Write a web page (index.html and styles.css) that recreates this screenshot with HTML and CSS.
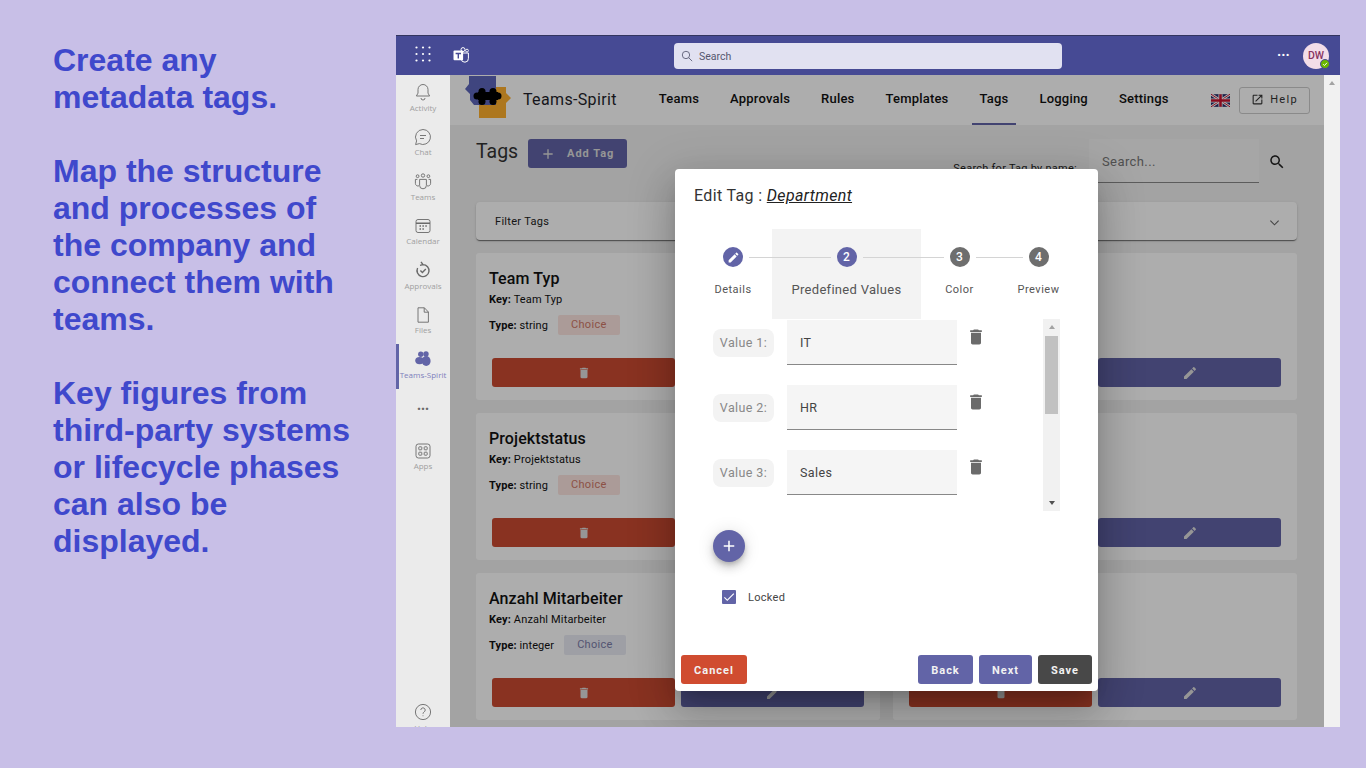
FILE: index.html
```html
<!DOCTYPE html>
<html lang="en">
<head>
<meta charset="utf-8">
<title>Teams-Spirit</title>
<link rel="stylesheet" href="styles.css">
</head>
<body>
<svg class="defs" aria-hidden="true">
  <symbol id="i-delete" viewBox="0 0 24 24"><path d="M6 19c0 1.1.9 2 2 2h8c1.1 0 2-.9 2-2V7H6v12zM19 4h-3.5l-1-1h-5l-1 1H5v2h14V4z"/></symbol>
  <symbol id="i-edit" viewBox="0 0 24 24"><path d="M3 17.25V21h3.75L17.81 9.94l-3.75-3.75L3 17.25zM20.71 7.04c.39-.39.39-1.02 0-1.41l-2.34-2.34c-.39-.39-1.02-.39-1.41 0l-1.83 1.83 3.75 3.75 1.83-1.83z"/></symbol>
  <symbol id="i-search" viewBox="0 0 24 24"><path d="M15.5 14h-.79l-.28-.27C15.41 12.59 16 11.11 16 9.5 16 5.91 13.09 3 9.5 3S3 5.91 3 9.5 5.91 16 9.5 16c1.61 0 3.09-.59 4.23-1.57l.27.28v.79l5 4.99L20.49 19l-4.99-5zm-6 0C7.01 14 5 11.99 5 9.5S7.01 5 9.5 5 14 7.01 14 9.5 11.99 14 9.5 14z"/></symbol>
  <symbol id="i-add" viewBox="0 0 24 24"><path d="M19 13h-6v6h-2v-6H5v-2h6V5h2v6h6v2z"/></symbol>
</svg>

<section class="pitch">
  <p>Create any<br>metadata tags.</p>
  <p>Map the structure<br>and processes of<br>the company and<br>connect them with<br>teams.</p>
  <p>Key figures from<br>third-party systems<br>or lifecycle phases<br>can also be<br>displayed.</p>
</section>

<div class="window">
  <header class="topbar">
    <svg class="waffle" viewBox="0 0 16 16"><g fill="#fff"><circle cx="1.5" cy="1.5" r="1.1"/><circle cx="8" cy="1.5" r="1.1"/><circle cx="14.5" cy="1.5" r="1.1"/><circle cx="1.5" cy="8" r="1.1"/><circle cx="8" cy="8" r="1.1"/><circle cx="14.5" cy="8" r="1.1"/><circle cx="1.5" cy="14.5" r="1.1"/><circle cx="8" cy="14.5" r="1.1"/><circle cx="14.5" cy="14.5" r="1.1"/></g></svg>
    <svg class="teams-logo" viewBox="0 0 16 16"><circle cx="10" cy="2.6" r="2" fill="none" stroke="#fff" stroke-width="1"/><circle cx="14" cy="3.6" r="1.4" fill="none" stroke="#fff" stroke-width=".9"/><path d="M8 6h7.4v5.4a3.6 3.6 0 0 1-7.2.4" fill="none" stroke="#fff" stroke-width="1"/><rect x="0.5" y="3.6" width="9.6" height="9.6" rx="1" fill="#fff"/><path d="M2.6 5.8h5.4v1.4H6v4.4H4.6V7.2h-2z" fill="#464a94"/></svg>
    <div class="top-search">
      <svg class="top-search-icon" viewBox="0 0 14 14"><circle cx="5.8" cy="5.8" r="4.3" fill="none" stroke="#55576f" stroke-width="1"/><path d="M9 9l4 4" stroke="#55576f" stroke-width="1" fill="none"/></svg>
      <span>Search</span>
    </div>
    <span class="top-more">···</span>
    <div class="avatar">DW<span class="presence"><svg viewBox="0 0 10 10"><path d="M2.6 5.2l1.7 1.7 3.2-3.4" fill="none" stroke="#fff" stroke-width="1.2"/></svg></span></div>
  </header>

  <div class="shell">
    <nav class="rail">
      <a class="rail-item"><svg viewBox="0 0 20 20"><path d="M10 2.5a5 5 0 0 0-5 5v3.6L3.4 14h13.2L15 11.1V7.5a5 5 0 0 0-5-5zM8 16a2 2 0 0 0 4 0" /></svg><span>Activity</span></a>
      <a class="rail-item"><svg viewBox="0 0 20 20"><path d="M10 2.5a7.5 7.5 0 1 1-3.6 14.1L2.6 17.6l1-3.7A7.5 7.5 0 0 1 10 2.5zM7 8.5h6M7 11.5h4"/></svg><span>Chat</span></a>
      <a class="rail-item"><svg viewBox="0 0 20 20"><circle cx="10" cy="4.5" r="1.7"/><circle cx="4.6" cy="5.2" r="1.4"/><circle cx="15.4" cy="5.2" r="1.4"/><path d="M6.6 8.4h6.8v6a3.4 3.4 0 0 1-6.8 0zM4.4 8.4H2.4v4a2.6 2.6 0 0 0 3.6 2.4M15.6 8.4h2v4a2.6 2.6 0 0 1-3.6 2.4"/></svg><span>Teams</span></a>
      <a class="rail-item"><svg viewBox="0 0 20 20"><rect x="3" y="3.5" width="14" height="13" rx="2"/><path class="thick" d="M3 7.2h14M6.5 10h1.5M9.4 10h1.5M12.3 10h1.5M6.5 13h1.5M9.4 13h1.5"/></svg><span>Calendar</span></a>
      <a class="rail-item"><svg viewBox="0 0 20 20"><path class="thick" d="M10 4.6a6 6 0 1 1-5.4 3.4M10 4.6L8 1.8M10 4.6L7 5.4M7.4 10.6l2 2 3.4-3.6"/></svg><span>Approvals</span></a>
      <a class="rail-item"><svg viewBox="0 0 20 20"><path d="M5 2.8h6.4L15.4 7v10.2H5zM11.2 2.8V7.2h4.2"/></svg><span>Files</span></a>
      <a class="rail-item rail-active"><svg viewBox="0 0 20 20"><g class="solid"><circle cx="7.8" cy="5.2" r="2.7"/><circle cx="13" cy="5" r="2.7"/><ellipse cx="6.6" cy="11.6" rx="4.4" ry="3.6"/><ellipse cx="13.2" cy="12" rx="4.4" ry="5"/></g></svg><span>Teams-Spirit</span></a>
      <a class="rail-item rail-dots"><span class="dots">···</span></a>
      <a class="rail-item rail-apps"><svg viewBox="0 0 20 20"><rect x="3" y="3" width="14" height="14" rx="2.4"/><rect x="5.8" y="5.8" width="3" height="3" rx=".6"/><rect x="11.2" y="5.8" width="3" height="3" rx=".6"/><rect x="5.8" y="11.2" width="3" height="3" rx=".6"/><rect x="11.2" y="11.2" width="3" height="3" rx=".6"/></svg><span>Apps</span></a>
      <a class="rail-item rail-help"><svg viewBox="0 0 20 20"><circle cx="10" cy="10" r="7.6"/><path d="M7.8 8a2.2 2.2 0 1 1 3.4 1.9c-.8.5-1.2 1-1.2 1.9M10 13.4v.8"/></svg><span>Help</span></a>
    </nav>

    <main class="app">
      <header class="app-header">
        <svg class="logo" viewBox="0 0 46 43">
          <path fill="#ffb02e" d="M14 11H41V17L46 22 41 27V42H14z"/>
          <path fill="#5e66bb" d="M4 0H31V29H9L5 24V18L0 13 4 8z"/>
          <g fill="#000">
            <rect x="13" y="16" width="20" height="8"/>
            <circle cx="12" cy="20" r="3.5"/><circle cx="33" cy="20" r="3.5"/>
            <circle cx="17" cy="15.5" r="3.5"/><circle cx="28" cy="15.5" r="3.5"/>
            <circle cx="17" cy="25.5" r="3.5"/><circle cx="28" cy="25.5" r="3.5"/>
          </g>
        </svg>
        <span class="brand">Teams-Spirit</span>
        <ul class="tabs">
          <li class="tab">Teams</li>
          <li class="tab">Approvals</li>
          <li class="tab">Rules</li>
          <li class="tab">Templates</li>
          <li class="tab tab-active">Tags</li>
          <li class="tab">Logging</li>
          <li class="tab">Settings</li>
        </ul>
        <svg class="flag" viewBox="0 0 60 40">
          <rect width="60" height="40" fill="#2a2f6b"/>
          <path d="M0 0l60 40M60 0L0 40" stroke="#fff" stroke-width="8"/>
          <path d="M0 0l60 40M60 0L0 40" stroke="#c8102e" stroke-width="3"/>
          <path d="M30 0v40M0 20h60" stroke="#fff" stroke-width="13"/>
          <path d="M30 0v40M0 20h60" stroke="#c8102e" stroke-width="8"/>
        </svg>
        <button class="help-btn"><svg viewBox="0 0 24 24"><path d="M19 19H5V5h7V3H5c-1.11 0-2 .9-2 2v14c0 1.1.89 2 2 2h14c1.1 0 2-.9 2-2v-7h-2v7zM14 3v2h3.59l-9.83 9.83 1.41 1.41L19 6.41V10h2V3h-7z"/></svg>Help</button>
      </header>

      <div class="page">
        <div class="toolbar">
          <h1 class="page-title">Tags</h1>
          <button class="add-btn"><svg><use href="#i-add"/></svg>Add Tag</button>
          <label class="search-label">Search for Tag by name:</label>
          <div class="search-field">Search...</div>
          <svg class="search-icon"><use href="#i-search"/></svg>
        </div>

        <div class="filter-bar">
          <span>Filter Tags</span>
          <svg viewBox="0 0 12 8"><path d="M1.5 1.5L6 6l4.500-4.500"/></svg>
        </div>

        <div class="cards">
          <article class="card">
            <h2>Team Typ</h2>
            <p class="key"><b>Key:</b> Team Typ</p>
            <p class="type"><span><b>Type:</b> string</span><em class="chip chip-red">Choice</em></p>
            <div class="actions"><button class="act act-del"><svg><use href="#i-delete"/></svg></button><button class="act act-edit"><svg><use href="#i-edit"/></svg></button></div>
          </article>
          <article class="card">
            <div class="actions"><button class="act act-del"><svg><use href="#i-delete"/></svg></button><button class="act act-edit"><svg><use href="#i-edit"/></svg></button></div>
          </article>
          <article class="card">
            <h2>Projektstatus</h2>
            <p class="key"><b>Key:</b> Projektstatus</p>
            <p class="type"><span><b>Type:</b> string</span><em class="chip chip-red">Choice</em></p>
            <div class="actions"><button class="act act-del"><svg><use href="#i-delete"/></svg></button><button class="act act-edit"><svg><use href="#i-edit"/></svg></button></div>
          </article>
          <article class="card">
            <div class="actions"><button class="act act-del"><svg><use href="#i-delete"/></svg></button><button class="act act-edit"><svg><use href="#i-edit"/></svg></button></div>
          </article>
          <article class="card">
            <h2>Anzahl Mitarbeiter</h2>
            <p class="key"><b>Key:</b> Anzahl Mitarbeiter</p>
            <p class="type"><span><b>Type:</b> integer</span><em class="chip chip-blue">Choice</em></p>
            <div class="actions"><button class="act act-del"><svg><use href="#i-delete"/></svg></button><button class="act act-edit"><svg><use href="#i-edit"/></svg></button></div>
          </article>
          <article class="card">
            <div class="actions"><button class="act act-del"><svg><use href="#i-delete"/></svg></button><button class="act act-edit"><svg><use href="#i-edit"/></svg></button></div>
          </article>
        </div>
      </div>

      <div class="overlay">
        <div class="dialog">
          <h3 class="dialog-title">Edit Tag : <a>Department</a></h3>
          <div class="stepper">
            <div class="step step-details">
              <div class="step-head"><i class="line line-none"></i><span class="dot dot-on"><svg><use href="#i-edit"/></svg></span><i class="line"></i></div>
              <span class="step-label">Details</span>
            </div>
            <div class="step step-current">
              <div class="step-head"><i class="line"></i><span class="dot dot-on">2</span><i class="line"></i></div>
              <span class="step-label">Predefined Values</span>
            </div>
            <div class="step step-color">
              <div class="step-head"><i class="line"></i><span class="dot">3</span><i class="line"></i></div>
              <span class="step-label">Color</span>
            </div>
            <div class="step step-preview">
              <div class="step-head"><i class="line"></i><span class="dot">4</span><i class="line line-none"></i></div>
              <span class="step-label">Preview</span>
            </div>
          </div>

          <div class="values">
            <div class="value-list">
              <div class="value-row"><span class="pill">Value 1:</span><div class="field">IT</div><svg class="trash"><use href="#i-delete"/></svg></div>
              <div class="value-row"><span class="pill">Value 2:</span><div class="field">HR</div><svg class="trash"><use href="#i-delete"/></svg></div>
              <div class="value-row"><span class="pill">Value 3:</span><div class="field">Sales</div><svg class="trash"><use href="#i-delete"/></svg></div>
            </div>
            <div class="vscroll vscroll-inner"><i class="arrow-up"></i><i class="thumb"></i><i class="arrow-down"></i></div>
          </div>

          <button class="fab"><svg><use href="#i-add"/></svg></button>

          <label class="locked"><span class="checkbox"><svg viewBox="0 0 24 24"><path d="M9 16.17L4.83 12l-1.42 1.41L9 19 21 7l-1.41-1.41z"/></svg></span>Locked</label>

          <footer class="dialog-actions">
            <button class="btn btn-cancel">Cancel</button>
            <button class="btn btn-purple btn-back">Back</button>
            <button class="btn btn-purple btn-next">Next</button>
            <button class="btn btn-save">Save</button>
          </footer>
        </div>
      </div>
    </main>

    <div class="vscroll vscroll-page"><i class="arrow-up"></i></div>
  </div>
</div>
</body>
</html>
```

FILE: styles.css
```css
* { box-sizing: border-box; }
html, body { margin: 0; height: 100%; }
body {
  width: 1366px;
  height: 768px;
  overflow: hidden;
  display: flex;
  align-items: flex-start;
  background: #c8bfe7;
  font-family: Roboto, sans-serif;
}
.defs { display: none; }
button { font-family: inherit; border: 0; padding: 0; cursor: pointer; }
h1, h2, h3, p, ul { margin: 0; padding: 0; }
ul { list-style: none; }
em, i { font-style: normal; }

/* left copy */
.pitch {
  width: 396px;
  flex: none;
  padding: 42px 0 0 53px;
  font: bold 32px/37px "Liberation Sans", Arial, sans-serif;
  color: #3f48cc;
}
.pitch p { margin-bottom: 37px; }

/* window */
.window {
  width: 944px;
  height: 692px;
  margin-top: 35px;
  flex: none;
  display: flex;
  flex-direction: column;
  background: #fff;
}
.topbar {
  height: 40px;
  flex: none;
  border-top: 1px solid #33355f;
  background: #464a94;
  display: flex;
  align-items: center;
}
.waffle { width: 16px; height: 16px; margin: 0 0 3px 19px; flex: none; }
.teams-logo { width: 16px; height: 16px; margin: 0 0 2px 22px; flex: none; }
.top-search {
  width: 388px;
  height: 26px;
  margin-left: 205px;
  border-radius: 4px;
  background: #e1e1f1;
  display: flex;
  align-items: center;
  padding: 1px 0 0 7px;
  font-size: 10.5px;
  color: #55576f;
  flex: none;
}
.top-search-icon { width: 12px; height: 12px; margin-right: 6px; }
.top-more { margin-left: 215px; color: #fff; font-size: 14px; font-weight: 700; width: 26px; text-align: left; line-height: 14px; margin-bottom: 2px; }
.avatar {
  position: relative;
  width: 26px;
  height: 26px;
  margin-left: 0;
  border-radius: 50%;
  background: #f3dde8;
  color: #87325f;
  font-size: 10.5px;
  font-weight: 500;
  text-align: center;
  line-height: 26px;
  flex: none;
}
.presence {
  position: absolute;
  right: -1px;
  bottom: 0;
  width: 10px;
  height: 10px;
  border-radius: 50%;
  background: #6bb700;
  border: 1px solid #464a94;
  display: flex;
}
.presence svg { width: 100%; height: 100%; }

.shell { flex: 1; min-height: 0; display: flex; }

/* teams rail */
.rail {
  width: 54px;
  flex: none;
  padding-top: 2px;
  background: #ebebeb;
  display: flex;
  flex-direction: column;
  overflow: hidden;
}
.rail-item {
  height: 44.5px;
  flex: none;
  display: flex;
  flex-direction: column;
  align-items: center;
  padding-top: 5px;
  font: 8px/10px "Open Sans", sans-serif;
  color: #a0a0a0;
  position: relative;
}
.rail-item svg {
  width: 20px;
  height: 20px;
  flex: none;
  fill: none;
  stroke: #6a6a6a;
  stroke-width: .9;
  margin-bottom: .5px;
}
.rail-item .thick { stroke-width: 1.4; }
.rail-item span { white-space: nowrap; }
.rail-active { color: #7d7fbc; }
.rail-active::before {
  content: "";
  position: absolute;
  left: 0;
  top: 0;
  bottom: 0;
  width: 3px;
  background: #6264a7;
}
.rail-active .solid { fill: #6264a7; stroke: none; }
.rail-dots .dots { font: bold 14px/30px "Open Sans", sans-serif; color: #6a6a6a; }
.rail-apps { margin-top: 2.5px; }
.rail-help { margin-top: auto; margin-bottom: -14px; }
.rail-help span { margin-top: .5px; }

/* app */
.app {
  width: 874px;
  flex: none;
  position: relative;
  overflow: hidden;
  display: flex;
  flex-direction: column;
  background: #f0f0f0;
  color: #111;
}
.app-header {
  height: 50px;
  flex: none;
  background: #fff;
  display: flex;
  align-items: center;
  padding: 0 14px 0 15px;
}
.logo { width: 46px; height: 43px; flex: none; margin-bottom: 5px; }
.brand { font-size: 16px; letter-spacing: .35px; margin: 0 0 2px 12px; color: #1f1f2b; }
.tabs { display: flex; gap: 15px; margin-left: 34px; align-self: stretch; }
.tab {
  padding: 0 8px 2px;
  display: flex;
  align-items: center;
  font-size: 13px;
  font-weight: 500;
  letter-spacing: .2px;
  white-space: nowrap;
  border-bottom: 2px solid transparent;
}
.tab-active { border-bottom-color: #6264a7; }
.flag { width: 19px; height: 15px; margin-left: auto; flex: none; }
.help-btn {
  width: 71px;
  height: 27px;
  margin-left: 9px;
  padding-bottom: 1px;
  border: 1px solid #ccc;
  border-radius: 3px;
  background: transparent;
  font-size: 11px;
  letter-spacing: 1.3px;
  color: #333;
  display: flex;
  align-items: center;
  justify-content: center;
}
.help-btn svg { width: 13px; height: 13px; margin-right: 6px; fill: #333; }

.page { padding: 14px 27px 0 26px; display: flex; flex-direction: column; }
.toolbar { height: 63px; display: flex; align-items: flex-start; flex: none; }
.page-title { width: 41px; padding-top: 1px; font-size: 19.5px; font-weight: 400; line-height: 24px; letter-spacing: 0; color: #333; white-space: nowrap; }
.add-btn {
  width: 99px;
  height: 29px;
  margin-left: 11px;
  border-radius: 3px;
  background: #6264a7;
  color: #ddd;
  font-size: 11px;
  font-weight: 700;
  letter-spacing: 1px;
  display: flex;
  align-items: center;
  padding-left: 12px;
}
.add-btn svg { width: 16px; height: 16px; fill: #ddd; margin-right: 11px; }
.search-label { margin: 23px 0 0 auto; font-size: 11px; line-height: 13px; color: #222; letter-spacing: .25px; }
.search-field {
  width: 170px;
  height: 44px;
  margin-left: 12px;
  padding: 2px 13px 0;
  display: flex;
  align-items: center;
  background: #f5f5f5;
  border-bottom: 1px solid #888;
  font-size: 13px;
  letter-spacing: .4px;
  color: #777;
}
.search-icon { width: 18px; height: 18px; margin: 14px 11px 0 9px; fill: #222; flex: none; }

.filter-bar {
  height: 38px;
  flex: none;
  padding: 0 17px 0 19px;
  display: flex;
  align-items: center;
  justify-content: space-between;
  background: #fff;
  border-radius: 4px;
  box-shadow: 0 2px 1px -1px rgba(0,0,0,.35), 0 1px 1px rgba(0,0,0,.2), 0 1px 3px rgba(0,0,0,.12);
  font-size: 11px;
  letter-spacing: .3px;
  color: #222;
}
.filter-bar svg { width: 11px; height: 8px; margin-top: 3px; fill: none; stroke: #666; stroke-width: 1.2; }

.cards {
  margin-top: 13px;
  display: grid;
  grid-template-columns: 404px 404px;
  grid-auto-rows: 147px;
  column-gap: 13px;
  row-gap: 13px;
}
.card {
  background: #fff;
  border-radius: 3px;
  padding: 16px 16px 13px 13px;
  display: flex;
  flex-direction: column;
}
.card h2 { font-size: 16px; font-weight: 500; line-height: 19px; letter-spacing: .1px; }
.key { font-size: 11px; line-height: 13px; margin-top: 5px; letter-spacing: .15px; }
.key b, .type b { font-weight: 700; }
.type { font-size: 11px; display: flex; align-items: center; margin-top: 9px; letter-spacing: .1px; }
.chip {
  height: 20px;
  margin-left: 10px;
  padding: 0 13px;
  border-radius: 2px;
  font-size: 11px;
  line-height: 20px;
  letter-spacing: .3px;
}
.chip-red { background: #fde5e1; color: #cf7867; }
.chip-blue { background: #e9eaf4; color: #7b7da8; }
.actions { margin-top: auto; padding-left: 3px; display: flex; gap: 6px; }
.act {
  width: 183px;
  height: 29px;
  border-radius: 3px;
  display: flex;
  align-items: center;
  justify-content: center;
}
.act svg { width: 14px; height: 14px; fill: #ddd; }
.act-edit svg { width: 16px; height: 16px; }
.act-del { background: #cb4a31; }
.act-edit { background: #6264a7; }

/* dialog */
.overlay {
  position: absolute;
  inset: 0;
  background: rgba(0,0,0,.32);
  display: flex;
  justify-content: center;
  padding: 94px 1px 0 0;
}
.dialog {
  width: 423px;
  height: 522px;
  background: #fff;
  border-radius: 4px;
  box-shadow: 0 11px 15px -7px rgba(0,0,0,.2), 0 24px 38px 3px rgba(0,0,0,.14), 0 9px 46px 8px rgba(0,0,0,.12);
  display: flex;
  flex-direction: column;
  color: #333;
}
.dialog-title {
  margin: 17px 0 0 19px;
  font-size: 16px;
  font-weight: 400;
  line-height: 19px;
  letter-spacing: .35px;
}
.dialog-title a { font-style: italic; text-decoration: underline; color: #222; }

.stepper { margin: 24px 0 0 19px; display: flex; height: 90px; }
.step { display: flex; flex-direction: column; align-items: center; padding-top: 18px; flex: none; }
.step-details { width: 78px; }
.step-current { width: 149px; background: #f3f3f3; }
.step-color { width: 77px; }
.step-preview { width: 81px; }
.step-head { width: 100%; height: 20px; display: flex; align-items: center; gap: 6px; }
.line { flex: 1; height: 1px; background: #d4d4d4; margin-top: 1px; }
.line-none { background: transparent; }
.dot {
  width: 20px;
  height: 20px;
  border-radius: 50%;
  background: #6e6e6e;
  color: #fff;
  font-size: 12px;
  font-weight: 500;
  display: flex;
  align-items: center;
  justify-content: center;
  flex: none;
}
.dot-on { background: #6264a7; }
.dot svg { width: 13px; height: 13px; fill: #fff; }
.step-label { margin-top: 16px; font-size: 11px; line-height: 13px; letter-spacing: .5px; color: #555; white-space: nowrap; }
.step-current .step-label { margin-top: 15px; font-size: 13px; line-height: 15px; letter-spacing: .3px; }

.values { margin: 0 0 0 38px; height: 192px; display: flex; justify-content: space-between; width: 347px; }
.value-list { display: flex; flex-direction: column; gap: 20px; padding-top: 1px; }
.value-row { display: flex; align-items: flex-start; height: 45px; }
.pill {
  width: 61px;
  height: 28px;
  margin-top: 9px;
  border-radius: 8px;
  background: #f3f3f3;
  color: #888;
  font-size: 12.5px;
  line-height: 28px;
  letter-spacing: .4px;
  text-align: center;
}
.field {
  width: 170px;
  height: 45px;
  margin-left: 13px;
  padding: 0 13px;
  background: #f5f5f5;
  border-bottom: 1px solid #888;
  display: flex;
  align-items: center;
  font-size: 12.5px;
  letter-spacing: .4px;
  color: #444;
}
.trash { width: 20px; height: 20px; margin: 7px 0 0 9px; fill: #6b6b6b; flex: none; }

.vscroll { background: #f1f1f1; display: flex; flex-direction: column; align-items: center; }
.vscroll-inner { width: 17px; height: 192px; }
.vscroll-page { width: 16px; flex: none; }
.arrow-up { width: 0; height: 0; border: 3.5px solid transparent; border-top: 0; border-bottom: 4px solid #a3a3a3; margin-top: 6px; }
.arrow-down { width: 0; height: 0; border: 3.5px solid transparent; border-bottom: 0; border-top: 4px solid #505050; margin-top: auto; margin-bottom: 6px; }
.thumb { width: 13px; height: 78px; background: #c1c1c1; margin-top: 7px; }

.fab {
  width: 32px;
  height: 32px;
  margin: 19px 0 0 38px;
  border-radius: 50%;
  background: #6264a7;
  box-shadow: 0 3px 5px -1px rgba(0,0,0,.2), 0 6px 10px rgba(0,0,0,.14), 0 1px 18px rgba(0,0,0,.12);
  display: flex;
  align-items: center;
  justify-content: center;
  flex: none;
}
.fab svg { width: 18px; height: 18px; fill: #fff; }

.locked {
  margin: 28px 0 0 47px;
  display: flex;
  align-items: flex-start;
  font-size: 11px;
  line-height: 16px;
  letter-spacing: .3px;
  color: #444;
}
.checkbox { width: 14px; height: 14px; margin-right: 12px; background: #6264a7; border-radius: 1px; display: flex; }
.checkbox svg { width: 14px; height: 14px; fill: #fff; }

.dialog-actions { margin-top: auto; padding: 0 6px 7px; display: flex; gap: 6px; }
.btn {
  height: 29px;
  padding-top: 1px;
  border-radius: 3px;
  color: #f2f2f2;
  font-size: 11px;
  font-weight: 700;
  letter-spacing: 1px;
}
.btn-cancel { width: 66px; background: #d04c30; margin-right: auto; }
.btn-purple { background: #6264a7; }
.btn-back { width: 55px; }
.btn-next { width: 53px; }
.btn-save { width: 54px; background: #484848; }
```
